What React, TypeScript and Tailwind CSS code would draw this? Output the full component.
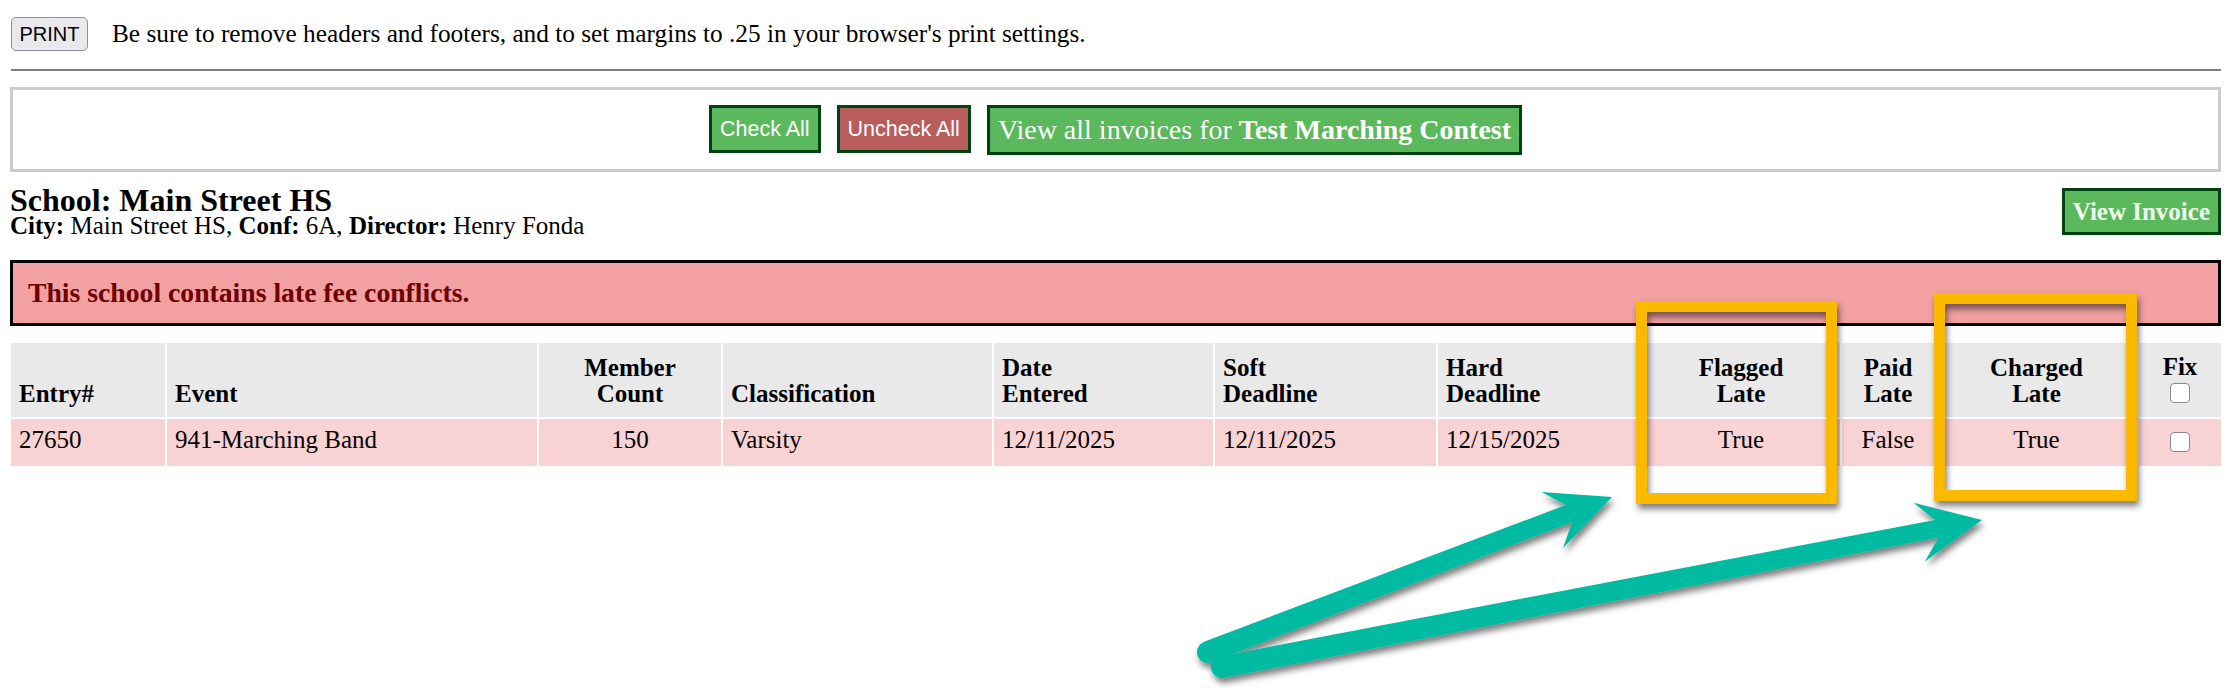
import React from "react";

type Pt = [number, number];

function arrowPath(T: Pt, P: Pt): string {
  const dx = P[0] - T[0];
  const dy = P[1] - T[1];
  const len = Math.hypot(dx, dy);
  const d: Pt = [dx / len, dy / len];
  const n: Pt = [-d[1], d[0]];
  const L = 64;
  const H = 30;
  const w1 = 18;
  const w0 = 22;
  const at = (base: Pt, along: number, side: number): string =>
    `${(base[0] + d[0] * along + n[0] * side).toFixed(1)} ${(base[1] + d[1] * along + n[1] * side).toFixed(1)}`;
  return [
    `M ${P[0]} ${P[1]}`,
    `L ${at(P, -L, H)}`,
    `L ${at(P, -L * 0.72, w1 / 2)}`,
    `L ${at(T, 0, w0 / 2)}`,
    `A ${w0 / 2} ${w0 / 2} 0 0 1 ${at(T, 0, -w0 / 2)}`,
    `L ${at(P, -L * 0.72, -w1 / 2)}`,
    `L ${at(P, -L, -H)}`,
    "Z",
  ].join(" ");
}

const cols = "grid-cols-[154px_370px_182px_269px_219px_221px_202px_198px_92px_201px_82px]";

function Box() {
  return <div className="w-[20px] h-[20px] rounded-[4px] border border-[#8a8a8a] bg-white" />;
}

export default function App() {
  const headL = "bg-[#e9e9e9] flex flex-col justify-end items-start px-[8px] pb-[10px] font-bold leading-[26px]";
  const headC = "bg-[#e9e9e9] flex flex-col justify-end items-center text-center px-[8px] pb-[10px] font-bold leading-[26px]";
  const cellL = "bg-[#f9d2d3] flex items-center px-[8px] pb-[5px] leading-[26px]";
  const cellC = "bg-[#f9d2d3] flex items-center justify-center px-[8px] pb-[5px] leading-[26px]";
  return (
    <div className="relative w-[2234px] h-[696px] bg-white text-black overflow-hidden font-['Liberation_Serif','Times_New_Roman',serif]">
      <div className="pl-[10px] pt-[15px] w-[2221px]">
        <div className="flex items-center gap-[24px] pl-[1px]">
          <div className="w-[77px] h-[34px] flex items-center justify-center rounded-[5px] border border-[#8f8f9d] bg-[#e9e9ed] font-['Liberation_Sans',Arial,sans-serif] text-[20px]">
            PRINT
          </div>
          <div className="text-[25.3px]">
            Be sure to remove headers and footers, and to set margins to .25 in your browser's print settings.
          </div>
        </div>
        <div className="mt-[16px] h-[2px] bg-[#7d7d7d] ml-[1px]" />
        <div className="mt-[16px] h-[85px] border-[3px] border-[#cccccc] flex justify-center items-start gap-[16px] pt-[15px]">
          <div className="h-[48px] px-[8px] flex items-center border-[3px] border-[#014211] bg-[#5cb85c] text-white font-['Liberation_Sans',Arial,sans-serif] text-[21.5px]">
            Check All
          </div>
          <div className="h-[48px] px-[8px] flex items-center border-[3px] border-[#014211] bg-[#b85c5c] text-white font-['Liberation_Sans',Arial,sans-serif] text-[21.5px]">
            Uncheck All
          </div>
          <div className="h-[50px] px-[8px] flex items-center border-[3px] border-[#014211] bg-[#5cb85c] text-white text-[28px]">
            <span>
              View all invoices for <b>Test Marching Contest</b>
            </span>
          </div>
        </div>
        <div className="flex justify-between items-start mt-[13px]">
          <div>
            <div className="text-[32px] font-bold leading-[30px]">School: Main Street HS</div>
            <div className="text-[25px] leading-[22px]">
              <b>City:</b> Main Street HS, <b>Conf:</b> 6A, <b>Director:</b> Henry Fonda
            </div>
          </div>
          <div className="mt-[3px] h-[47px] px-[8px] flex items-center border-[3px] border-[#014211] bg-[#5cb85c] text-[#eefcee] font-bold text-[25px]">
            View Invoice
          </div>
        </div>
        <div className="mt-[23px] h-[66px] border-[3px] border-black bg-[#f2a0a1] flex items-center px-[15px]">
          <span className="text-[27.7px] font-bold text-[#6e0000]">This school contains late fee conflicts.</span>
        </div>
        <div className={`mt-[17px] ml-[1px] w-[2210px] grid ${cols} gap-[2px] text-[25px]`}>
          <div className={`${headL} h-[74px]`}>Entry#</div>
          <div className={headL}>Event</div>
          <div className={headC}>
            <span>Member</span>
            <span>Count</span>
          </div>
          <div className={headL}>Classification</div>
          <div className={headL}>
            <span>Date</span>
            <span>Entered</span>
          </div>
          <div className={headL}>
            <span>Soft</span>
            <span>Deadline</span>
          </div>
          <div className={headL}>
            <span>Hard</span>
            <span>Deadline</span>
          </div>
          <div className={headC}>
            <span>Flagged</span>
            <span>Late</span>
          </div>
          <div className={headC}>
            <span>Paid</span>
            <span>Late</span>
          </div>
          <div className={headC}>
            <span>Charged</span>
            <span>Late</span>
          </div>
          <div className="bg-[#e9e9e9] flex flex-col justify-end items-center pb-[14px] font-bold leading-[26px]">
            <span className="mb-[3px]">Fix</span>
            <Box />
          </div>

          <div className={`${cellL} h-[47px]`}>27650</div>
          <div className={cellL}>941-Marching Band</div>
          <div className={cellC}>150</div>
          <div className={cellL}>Varsity</div>
          <div className={cellL}>12/11/2025</div>
          <div className={cellL}>12/11/2025</div>
          <div className={cellL}>12/15/2025</div>
          <div className={cellC}>True</div>
          <div className={cellC}>False</div>
          <div className={cellC}>True</div>
          <div className="bg-[#f9d2d3] flex items-center justify-center">
            <Box />
          </div>
        </div>
      </div>

      <div className="absolute left-[1636px] top-[301px] w-[201px] h-[203px] border-[11px] border-[#fbb900] drop-shadow-[2px_5px_3px_rgba(0,0,0,0.5)]" />
      <div className="absolute left-[1934px] top-[293px] w-[203px] h-[208px] border-[11px] border-[#fbb900] drop-shadow-[2px_5px_3px_rgba(0,0,0,0.5)]" />

      <svg className="absolute left-0 top-0 pointer-events-none" width="2234" height="696" viewBox="0 0 2234 696">
        <defs>
          <filter id="sh" filterUnits="userSpaceOnUse" x="0" y="0" width="2234" height="696">
            <feDropShadow dx="2" dy="5" stdDeviation="3" floodColor="#000000" floodOpacity="0.5" />
          </filter>
        </defs>
        <g filter="url(#sh)" fill="#00bba1">
          <path d={arrowPath([1208, 652], [1612, 497])} />
          <path d={arrowPath([1222, 667], [1982, 520])} />
        </g>
      </svg>
    </div>
  );
}
